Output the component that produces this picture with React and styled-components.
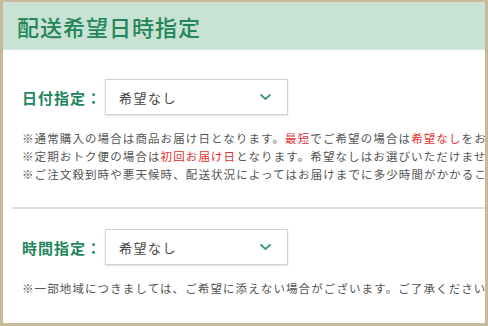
import React from "react"
import styled, { createGlobalStyle } from "styled-components"

const Global = createGlobalStyle`
  html, body {
    margin: 0;
    padding: 0;
    background: #fff;
  }
  body {
    font-family: "Noto Sans CJK JP", "Noto Sans", sans-serif;
  }
`

const Frame = styled.div`
  width: 488px;
  height: 326px;
  box-sizing: border-box;
  border: 3px solid #c9b99b;
  border-top-width: 2px;
  background: #fff;
  overflow: hidden;
`

const Header = styled.div`
  height: 48px;
  display: flex;
  align-items: center;
  padding-left: 14px;
  background: #c8e3d3;
  border-bottom: 1px solid #d6e9de;
  box-sizing: border-box;
`

const Title = styled.h1`
  margin: 0;
  font-size: 22px;
  font-weight: 500;
  letter-spacing: 1px;
  color: #23855a;
`

const Body = styled.div`
  padding-top: 29px;
`

const Section = styled.div`
  padding-left: 19px;
`

const Row = styled.div`
  display: flex;
  align-items: center;
`

const Label = styled.span`
  width: 83px;
  font-size: 15px;
  font-weight: 700;
  letter-spacing: 1px;
  color: #23855a;
`

const SelectBox = styled.div`
  width: 183px;
  height: 36px;
  box-sizing: border-box;
  display: flex;
  align-items: center;
  justify-content: space-between;
  padding: 0 15px 0 13px;
  border: 1px solid #d2d2d2;
  box-shadow: 0 1px 2px rgba(0, 0, 0, 0.12);
  background: #fff;
  font-size: 13px;
  letter-spacing: 1.5px;
  color: #444;
`

const Notes = styled.div`
  margin-top: ${p => p.$top}px;
  font-size: 11.5px;
  line-height: 18px;
  letter-spacing: 1.1px;
  color: #555;
  white-space: nowrap;
`

const Red = styled.span`
  color: #e3302f;
`

const Divider = styled.hr`
  margin: 24px 0 20px 9px;
  border: 0;
  height: 2px;
  background: #dedede;
`

const Chevron = () => (
  <svg width="13" height="8" viewBox="0 0 13 8">
    <path d="M1.5 1.5 L6.5 6 L11.5 1.5" fill="none" stroke="#3a9a6a" strokeWidth="1.8" />
  </svg>
)

const Select = ({ value }) => (
  <SelectBox>
    <span>{value}</span>
    <Chevron />
  </SelectBox>
)

export default function App() {
  return (
    <>
      <Global />
      <Frame>
        <Header>
          <Title>配送希望日時指定</Title>
        </Header>
        <Body>
          <Section>
            <Row>
              <Label>日付指定：</Label>
              <Select value="希望なし" />
            </Row>
            <Notes $top={14}>
              <div>
                ※通常購入の場合は商品お届け日となります。<Red>最短</Red>でご希望の場合は
                <Red>希望なし</Red>をお選びください。
              </div>
              <div>
                ※定期おトク便の場合は<Red>初回お届け日</Red>となります。希望なしはお選びいただけません。
              </div>
              <div>※ご注文殺到時や悪天候時、配送状況によってはお届けまでに多少時間がかかることがございます。</div>
            </Notes>
          </Section>
          <Divider />
          <Section>
            <Row>
              <Label>時間指定：</Label>
              <Select value="希望なし" />
            </Row>
            <Notes $top={14}>
              <div>※一部地域につきましては、ご希望に添えない場合がございます。ご了承ください。</div>
            </Notes>
          </Section>
        </Body>
      </Frame>
    </>
  )
}
